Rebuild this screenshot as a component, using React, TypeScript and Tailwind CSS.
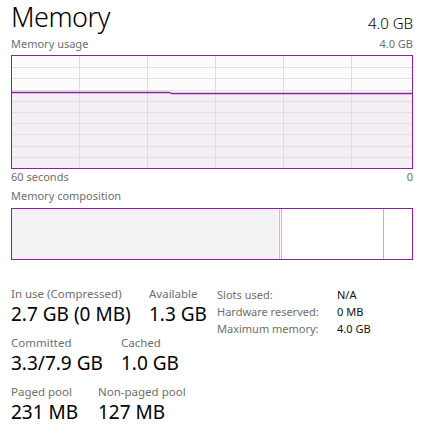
import React from "react";

const PURPLE = "#8a1fa6";

function UsageGraph() {
  const w = 400;
  const h = 112;
  const vx = [67, 135, 203, 271, 339];
  const hy = Array.from({ length: 9 }, (_, i) => Math.round((i + 1) * 11.2) + 0.5);
  const fillPath = `M0 36 L157 36 L160 37 L${w} 37 L${w} ${h} L0 ${h} Z`;
  const linePath = `M0 36.5 L157 36.5 L160 37.5 L${w} 37.5`;
  return (
    <svg width={w} height={h} className="block">
      <rect x={0} y={0} width={w} height={h} fill="#fdfcfd" />
      <path d={fillPath} fill="#f3eff4" />
      {hy.map((y) => (
        <line key={"h" + y} x1={0} x2={w} y1={y} y2={y} stroke="#e6dce9" strokeWidth={1} />
      ))}
      {vx.map((x) => (
        <line key={"v" + x} x1={x + 0.5} x2={x + 0.5} y1={0} y2={h} stroke="#e2d9e5" strokeWidth={1} />
      ))}
      <path d={linePath} fill="none" stroke={PURPLE} strokeWidth={1.3} />
    </svg>
  );
}

function CompositionBar() {
  return (
    <svg width={400} height={50} className="block">
      <rect x={0} y={0} width={400} height={50} fill="#ffffff" />
      <rect x={0} y={0} width={266} height={50} fill="#f3f1f3" />
      <line x1={267.5} x2={267.5} y1={0} y2={50} stroke="#cfb0d6" strokeWidth={1} />
      <line x1={269.5} x2={269.5} y1={0} y2={50} stroke="#cfb0d6" strokeWidth={1} />
      <line x1={371.5} x2={371.5} y1={0} y2={50} stroke="#c8aad0" strokeWidth={1} />
    </svg>
  );
}

function Stat({ label, value, w }: { label: string; value: string; w: string }) {
  return (
    <div className={`${w} shrink-0`}>
      <div className="text-[11.5px] leading-[14px] text-[#6e6e6e] whitespace-nowrap">{label}</div>
      <div className="text-[19px] leading-[27px] text-black whitespace-nowrap">{value}</div>
    </div>
  );
}

export default function App() {
  return (
    <div className="w-[426px] h-[440px] bg-white pl-[11px] pr-[13px] font-['Noto_Sans',sans-serif] overflow-hidden">
      <div className="flex items-end justify-between h-[34px] pb-[1px]">
        <div className="text-[27px] leading-[32px] font-light text-black tracking-[-0.5px]">Memory</div>
        <div className="text-[15px] leading-[20px] text-black font-light">4.0 GB</div>
      </div>
      <div className="flex justify-between h-[21px] pt-[3px] text-[11px] leading-[14px] text-[#6e6e6e]">
        <span>Memory usage</span>
        <span>4.0 GB</span>
      </div>
      <div className="h-[114px] border border-[#8a1fa6]">
        <UsageGraph />
      </div>
      <div className="flex justify-between h-[17px] pt-[1px] text-[11px] leading-[14px] text-[#6e6e6e]">
        <span>60 seconds</span>
        <span>0</span>
      </div>
      <div className="h-[22px] pt-[3px] text-[11px] leading-[14px] text-[#6e6e6e]">Memory composition</div>
      <div className="h-[52px] border border-[#8a1fa6]">
        <CompositionBar />
      </div>
      <div className="flex items-start mt-[27px]">
        <div className="w-[206px] shrink-0 flex flex-col gap-[8px]">
          <div className="flex">
            <Stat label="In use (Compressed)" value="2.7 GB (0 MB)" w="w-[138px]" />
            <Stat label="Available" value="1.3 GB" w="w-[60px]" />
          </div>
          <div className="flex">
            <Stat label="Committed" value="3.3/7.9 GB" w="w-[110px]" />
            <Stat label="Cached" value="1.0 GB" w="w-[60px]" />
          </div>
          <div className="flex">
            <Stat label="Paged pool" value="231 MB" w="w-[87px]" />
            <Stat label="Non-paged pool" value="127 MB" w="w-[90px]" />
          </div>
        </div>
        <div className="self-start grid grid-cols-[120px_auto] content-start text-[11px] leading-[17px] -mt-[1px]">
          <span className="text-[#6e6e6e]">Slots used:</span>
          <span className="text-[#111]">N/A</span>
          <span className="text-[#6e6e6e]">Hardware reserved:</span>
          <span className="text-[#111]">0 MB</span>
          <span className="text-[#6e6e6e]">Maximum memory:</span>
          <span className="text-[#111]">4.0 GB</span>
        </div>
      </div>
    </div>
  );
}
